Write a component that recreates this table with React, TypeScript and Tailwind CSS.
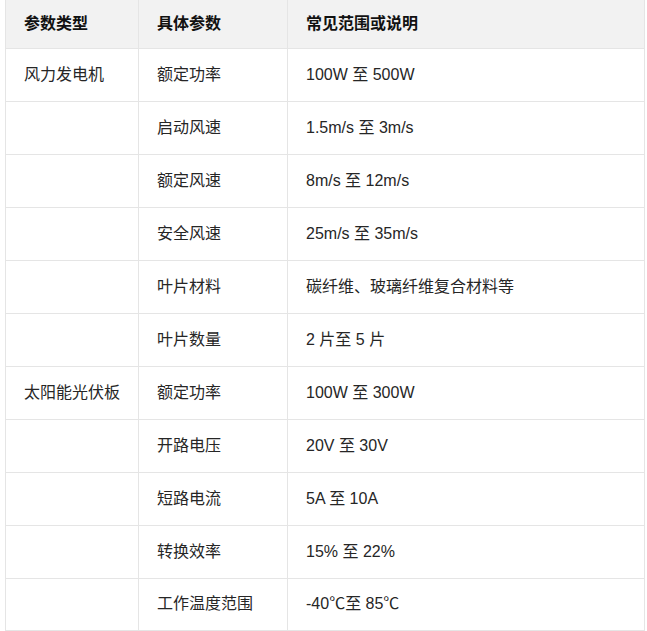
const rows: [string, string, string][] = [
  ["风力发电机", "额定功率", "100W 至 500W"],
  ["", "启动风速", "1.5m/s 至 3m/s"],
  ["", "额定风速", "8m/s 至 12m/s"],
  ["", "安全风速", "25m/s 至 35m/s"],
  ["", "叶片材料", "碳纤维、玻璃纤维复合材料等"],
  ["", "叶片数量", "2 片至 5 片"],
  ["太阳能光伏板", "额定功率", "100W 至 300W"],
  ["", "开路电压", "20V 至 30V"],
  ["", "短路电流", "5A 至 10A"],
  ["", "转换效率", "15% 至 22%"],
  ["", "工作温度范围", "-40℃至 85℃"],
];

export default function App() {
  return (
    <div
      className="w-[647px] h-[631px] bg-white pl-[5px] overflow-hidden"
      style={{ fontFamily: '"Liberation Sans", "Noto Sans CJK SC", sans-serif' }}
    >
      <table className="w-[640px] border-collapse table-fixed text-[16px] text-[#262626]">
        <colgroup>
          <col className="w-[133px]" />
          <col className="w-[149px]" />
          <col />
        </colgroup>
        <thead>
          <tr className="h-[48px] bg-[#f2f2f2]">
            {["参数类型", "具体参数", "常见范围或说明"].map((h) => (
              <th
                key={h}
                className="border border-t-0 border-[#e5e5e5] px-[18px] text-left font-bold text-[#111]"
              >
                {h}
              </th>
            ))}
          </tr>
        </thead>
        <tbody>
          {rows.map((r, i) => (
            <tr key={i} className={i === rows.length - 1 ? "h-[52px]" : "h-[53px]"}>
              {r.map((c, j) => (
                <td key={j} className="border border-[#e5e5e5] px-[18px] whitespace-nowrap">
                  {c}
                </td>
              ))}
            </tr>
          ))}
        </tbody>
      </table>
    </div>
  );
}
